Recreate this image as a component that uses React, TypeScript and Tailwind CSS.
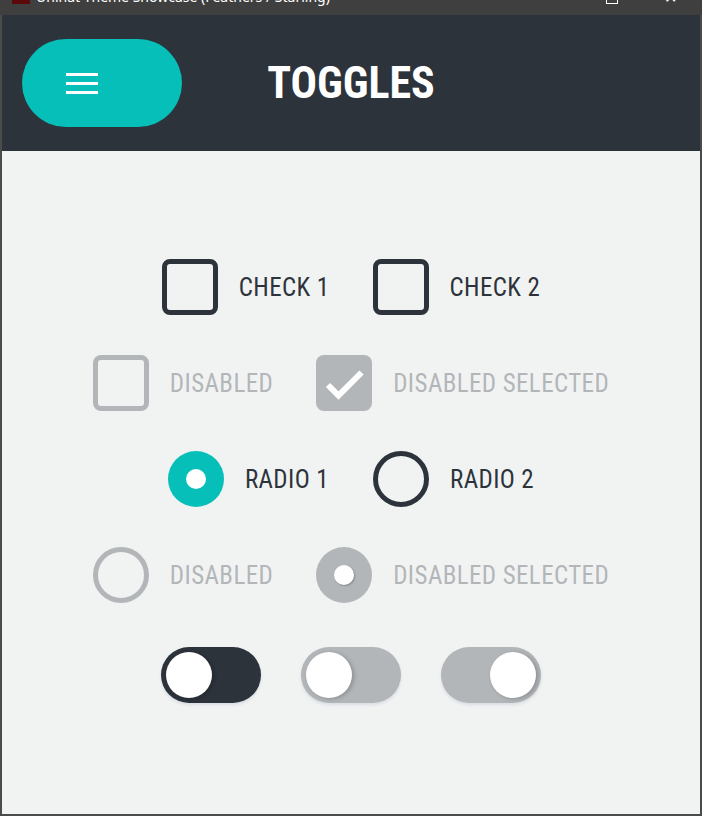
const DARK = "#2d333b";

function CheckBox({ label, disabled, checked }: { label: string; disabled?: boolean; checked?: boolean }) {
  return (
    <div className="flex items-center gap-[21px]">
      {checked ? (
        <span className="flex h-14 w-14 items-center justify-center rounded-[8px] bg-[#b3b6b9]">
          <svg viewBox="0 0 56 56" className="h-14 w-14">
            <path d="M12 30 L22.5 40.5 L45.5 17.5" fill="none" stroke="#fff" strokeWidth="6" />
          </svg>
        </span>
      ) : (
        <span
          className={`h-14 w-14 rounded-[8px] border-[5px] ${disabled ? "border-[#b3b6b9]" : "border-[#2d333b]"}`}
        />
      )}
      <span className={`text-[25px] leading-none tracking-[0.4px] ${disabled ? "text-[#b3b6b9]" : "text-[#2d333b]"}`}>
        {label}
      </span>
    </div>
  );
}

function Radio({ label, disabled, selected }: { label: string; disabled?: boolean; selected?: boolean }) {
  let circle;
  if (selected) {
    circle = (
      <span
        className={`flex h-14 w-14 items-center justify-center rounded-full ${disabled ? "bg-[#b3b6b9]" : "bg-[#07bfb9]"}`}
      >
        <span
          className={`h-5 w-5 rounded-full bg-white ${disabled ? "shadow-[1px_1px_2px_rgba(0,0,0,0.25)]" : ""}`}
        />
      </span>
    );
  } else {
    circle = (
      <span
        className={`h-14 w-14 rounded-full border-[5px] ${disabled ? "border-[#b3b6b9]" : "border-[#2d333b]"}`}
      />
    );
  }
  return (
    <div className="flex items-center gap-[21px]">
      {circle}
      <span className={`text-[25px] leading-none tracking-[0.4px] ${disabled ? "text-[#b3b6b9]" : "text-[#2d333b]"}`}>
        {label}
      </span>
    </div>
  );
}

function Toggle({ on, disabled }: { on?: boolean; disabled?: boolean }) {
  return (
    <div
      className={`flex h-14 w-[100px] items-center rounded-full p-[5px] shadow-[0_2px_3px_rgba(110,130,170,0.18)] ${
        disabled ? "bg-[#b3b6b9]" : "bg-[#2d333b]"
      } ${on ? "justify-end" : "justify-start"}`}
    >
      <span className="h-[46px] w-[46px] rounded-full bg-white shadow-[2px_1px_4px_rgba(0,0,0,0.22)]" />
    </div>
  );
}

export default function App() {
  return (
    <div
      className="h-[839px] w-[702px] bg-white"
      style={{ fontFamily: '"Roboto Condensed", Roboto, "Liberation Sans", sans-serif' }}
    >
      {/* window title bar */}
      <div className="relative h-[15px] overflow-hidden bg-[#3f3f3f]">
        <span className="absolute left-[12px] top-[-14px] h-[18px] w-[18px] bg-[#5a0a0a]" />
        <span
          className="absolute left-[36px] top-[-12px] whitespace-nowrap text-[14px] leading-[18px] text-white"
          style={{ fontFamily: '"Noto Sans", "Open Sans", sans-serif' }}
        >
          Unihat Theme Showcase (Feathers / Starling)
        </span>
        <span className="absolute left-[606px] top-[-8px] h-[12px] w-[12px] border border-white" />
        <span
          className="absolute left-[664px] top-[-12px] text-[16px] leading-[18px] text-white"
          style={{ fontFamily: '"Noto Sans", sans-serif' }}
        >
          ✕
        </span>
      </div>

      <div className="flex h-[801px] flex-col border-x-2 border-b-2 border-[#4b4b4b]">
        {/* header */}
        <header className="grid h-[136px] shrink-0 grid-cols-[1fr_auto_1fr] items-center bg-[#2d333b] px-5">
          <button className="flex h-[88px] w-[160px] items-center rounded-full bg-[#07bfb9] pl-[44px]">
            <svg viewBox="0 0 32 21" className="h-[21px] w-8" fill="#fff">
              <rect x="0" y="0" width="32" height="3" />
              <rect x="0" y="9" width="32" height="3" />
              <rect x="0" y="18" width="32" height="3" />
            </svg>
          </button>
          <h1 className="text-[44px] font-bold leading-none text-white">TOGGLES</h1>
          <div />
        </header>

        {/* toggles */}
        <main className="flex flex-1 flex-col items-center gap-10 bg-[#f1f3f2] pt-[108px]" style={{ color: DARK }}>
          <div className="flex items-center gap-[43px]">
            <CheckBox label="CHECK 1" />
            <CheckBox label="CHECK 2" />
          </div>
          <div className="flex items-center gap-[43px]">
            <CheckBox label="DISABLED" disabled />
            <CheckBox label="DISABLED SELECTED" disabled checked />
          </div>
          <div className="flex items-center gap-[44px]">
            <Radio label="RADIO 1" selected />
            <Radio label="RADIO 2" />
          </div>
          <div className="flex items-center gap-[43px]">
            <Radio label="DISABLED" disabled />
            <Radio label="DISABLED SELECTED" disabled selected />
          </div>
          <div className="mt-1 flex items-center gap-10">
            <Toggle />
            <Toggle disabled />
            <Toggle disabled on />
          </div>
        </main>
      </div>
    </div>
  );
}
